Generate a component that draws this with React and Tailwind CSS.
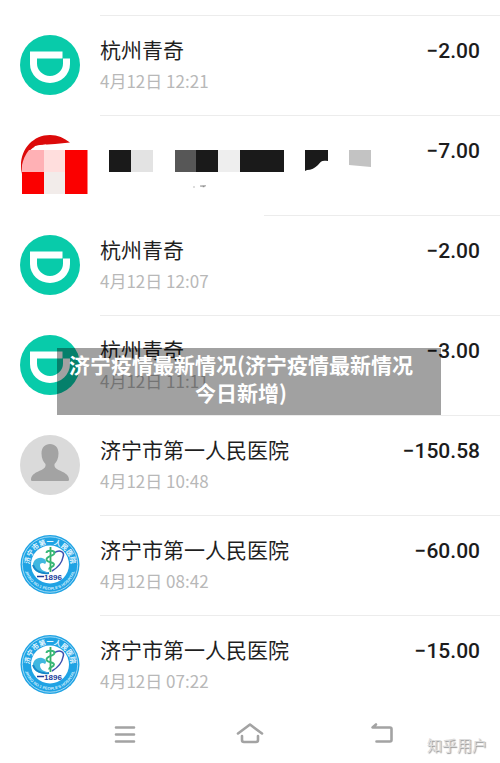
import { useState } from "react";

const pagos = [
  { id: 1, icono: "didi", nombre: "杭州青奇", fecha: "4月12日 12:21", monto: "−2.00" },
  { id: 2, icono: "oculto", monto: "−7.00" },
  { id: 3, icono: "didi", nombre: "杭州青奇", fecha: "4月12日 12:07", monto: "−2.00", lineaCorta: true },
  { id: 4, icono: "didi", nombre: "杭州青奇", fecha: "4月12日 11:11", monto: "−3.00" },
  { id: 5, icono: "persona", nombre: "济宁市第一人民医院", fecha: "4月12日 10:48", monto: "−150.58" },
  { id: 6, icono: "hospital", nombre: "济宁市第一人民医院", fecha: "4月12日 08:42", monto: "−60.00" },
  { id: 7, icono: "hospital", nombre: "济宁市第一人民医院", fecha: "4月12日 07:22", monto: "−15.00" },
];

function IconoDidi() {
  return (
    <svg viewBox="0 0 60 60" className="size-full" aria-hidden="true">
      <circle cx="30" cy="30" r="30" fill="#08cbaa" />
      <path
        fill="#fff"
        fillRule="evenodd"
        d="M10 16.5H42.5V23.5H50V29A20 19 0 0 1 10 29ZM17 23.500V28.500A13 12.500 0 0 0 43 28.500V23.500Z"
      />
    </svg>
  );
}

function IconoPersona() {
  return (
    <svg viewBox="0 0 60 60" className="size-full" aria-hidden="true">
      <circle cx="30" cy="30" r="30" fill="#dadada" />
      <path
        fill="#a3a3a3"
        d="M30 9c5 0 8.500 3.500 8.500 9.500 0 5-2 8.500-4 10.500-.5 3 1 4.500 4 6 5 2 10.500 4.500 10.500 9.500 0 1-.6 1.500-1.500 1.500h-35c-.9 0-1.500-.5-1.500-1.500 0-5 5.500-7.500 10.500-9.500 3-1.500 4.500-3 4-6-2-2-4-5.500-4-10.500C21.500 12.500 25 9 30 9z"
      />
    </svg>
  );
}

function IconoHospital({ id }) {
  return (
    <svg viewBox="0 0 60 60" className="size-full" aria-hidden="true">
      <defs>
        <path id={`arriba-${id}`} d="M11 37.500A20.500 20.500 0 1 1 49 37.500" />
        <path id={`abajo-${id}`} d="M5 36A26 26 0 0 0 55 36" />
      </defs>
      <circle cx="30" cy="29.500" r="29.500" fill="#1fa3e4" />
      <circle cx="30" cy="29.500" r="27.700" fill="none" stroke="#bfe6f8" strokeWidth="0.8" />
      <circle cx="30" cy="29.500" r="19" fill="#fff" />
      <text fill="#e4f6ff" fontSize="7" fontWeight="700" className="font-['Noto_Sans_CJK_SC',sans-serif]">
        <textPath href={`#arriba-${id}`} startOffset="50%" textAnchor="middle">
          济宁市第一人民医院
        </textPath>
      </text>
      <text fill="#d5f0fd" fontSize="4" fontWeight="700" className="font-['Liberation_Sans',sans-serif]">
        <textPath href={`#abajo-${id}`} startOffset="50%" textAnchor="middle">
          JINING NO.1 PEOPLE'S HOSPITAL
        </textPath>
      </text>
      <path d="M13 32c-1-6 4-10 9-9 4 1 5 4 3 6-2-2-5-1-5 1 0 4 3 6 7 7-7 2-12 0-14-5z" fill="#40b7e0" />
      <path d="M13 30c2 6 8 9 16 8" fill="none" stroke="#1687c8" strokeWidth="2" />
      <path d="M34 18c6-4 11-1 9 4-1 6-6 11-11 14" fill="none" stroke="#3c4fae" strokeWidth="1.500" />
      <path d="M30.500 12V37" stroke="#37ad68" strokeWidth="1.800" />
      <path d="M26.500 18c0-3 8-3 8 0s-8 3-8 6.500 7.500 2 7.500 5-5 2-5 5" fill="none" stroke="#37b878" strokeWidth="1.900" />
      <path d="M17 41.500h7" stroke="#1d3f9c" strokeWidth="1.500" />
      <text x="33" y="45" textAnchor="middle" fontSize="8" fontWeight="700" fill="#1d3f9c" className="font-['Liberation_Sans',sans-serif]">
        1896
      </text>
    </svg>
  );
}

// logo tapado con bloques de mosaico
function IconoOculto() {
  return (
    <svg viewBox="0 0 68 60" className="h-15 w-17 max-w-none" aria-hidden="true">
      <path d="M2 39C-3 18 11 0 30 0c8 0 14 3 20 7.500L35 9l-15 1C9 12 3 22 2 39z" fill="#dc0a0a" />
      <path d="M15 11l11-1.500 1 1.500 23-3v8H12z" fill="#fff" />
      <path d="M2 37V30c1-5 3-10 7-15h15v22z" fill="#ffb1b5" />
      <path d="M24 15h21v22H24z" fill="#ffdedd" />
      <path d="M24 37h21v22H24z" fill="#f2ecea" />
      <path d="M2 37h22v22H2zM45 15h22.500v44H45z" fill="#fb0000" />
    </svg>
  );
}

function TextoOculto() {
  return (
    <svg viewBox="0 0 280 60" className="mt-[15px] h-15 w-70 shrink-0" role="img" aria-label="已隐藏">
      <path d="M9 19h22v22H9zM96 19h22v22H96zM140 19h44v22h-44z" fill="#1a1a1a" />
      <path d="M31 19h22v22H31z" fill="#e3e3e3" />
      <path d="M75 19h21v22H75z" fill="#575757" />
      <path d="M118 19h22v22h-22z" fill="#eee" />
      <path d="M205 19h23v11c-6-1-7 0-10 4-3 3-7 5-11 5l-2 1z" fill="#1a1a1a" />
      <path d="M249 19h22v17l-22-2z" fill="#c3c3c3" />
      <path d="M100 55l6-.5-2 1.500zM93 56h2" stroke="#bbb" strokeWidth="1" />
    </svg>
  );
}

function Avatar({ tipo, id }) {
  return (
    <div className="mt-5 size-15 shrink-0">
      {tipo === "didi" && <IconoDidi />}
      {tipo === "persona" && <IconoPersona />}
      {tipo === "hospital" && <IconoHospital id={id} />}
      {tipo === "oculto" && <IconoOculto />}
    </div>
  );
}

function Pago({ pago, activo, onSelect }) {
  return (
    <li
      className="flex h-[100px] gap-5 pl-5"
      aria-current={activo ? "true" : undefined}
      onClick={onSelect}
    >
      <Avatar tipo={pago.icono} id={pago.id} />
      <div className="min-w-0 flex-1">
        <div className={pago.lineaCorta ? "ml-[164px] h-px bg-[#ececec]" : "h-px bg-[#ececec]"} />
        <div className="flex justify-between pr-5">
          {pago.nombre ? (
            <div className="pt-[19px]">
              <p className="text-[21px] leading-7 text-[#1f1f1f]">{pago.nombre}</p>
              <p className="mt-1 text-[17px] leading-7 text-[#b8b8b8]">{pago.fecha}</p>
            </div>
          ) : (
            <TextoOculto />
          )}
          <p className="pt-[19px] font-['Roboto',sans-serif] text-[21px] leading-8 font-medium whitespace-nowrap text-[#1c1c1c]">
            {pago.monto}
          </p>
        </div>
      </div>
    </li>
  );
}

export default function App() {
  const [activo, setActivo] = useState(null);

  return (
    <main className="relative overflow-hidden bg-white pt-[15px] font-['Noto_Sans_CJK_SC',sans-serif]">
      <ul>
        {pagos.map((pago) => (
          <Pago
            key={pago.id}
            pago={pago}
            activo={activo === pago.id}
            onSelect={() => setActivo(pago.id)}
          />
        ))}
      </ul>

      <nav className="flex h-12 items-start justify-center gap-[84px] text-[#a3a3a3]">
        <button type="button" aria-label="菜单" className="h-9 w-10">
          <svg viewBox="0 0 40 36" fill="none" stroke="currentColor" strokeWidth="2.600" strokeLinecap="round">
            <path d="M10 12.500h18M10 19.500h18M10 26.500h18" />
          </svg>
        </button>
        <button type="button" aria-label="主页" className="h-9 w-10">
          <svg viewBox="0 0 40 36" fill="none" stroke="currentColor" strokeWidth="2.600" strokeLinecap="round" strokeLinejoin="round">
            <path d="M8 18.500 20 9.500l12 9M12 21v4q0 2 2 2h12q2 0 2-2v-4" />
          </svg>
        </button>
        <button type="button" aria-label="返回" className="h-9 w-10">
          <svg viewBox="0 0 40 36" fill="none" stroke="currentColor" strokeWidth="2.600" strokeLinecap="round" strokeLinejoin="round">
            <path d="M22 9.500 18.500 12.500H36q1.500 0 1.500 1.500v11q0 1.500-1.500 1.500H22.500" />
          </svg>
        </button>
      </nav>

      {/* título superpuesto */}
      <h1 className="absolute top-[348px] right-[59px] left-[57px] h-[67px] bg-black/37 pt-0.5 pr-4 text-center text-[21px] leading-7 font-bold text-white">
        济宁疫情最新情况(济宁疫情最新情况
        <br />
        今日新增)
      </h1>

      <span className="absolute right-[13px] bottom-1.5 text-[15px] leading-6 text-[#dcdcdc] [text-shadow:1px_1px_1px_#999]">
        知乎用户
      </span>
    </main>
  );
}
